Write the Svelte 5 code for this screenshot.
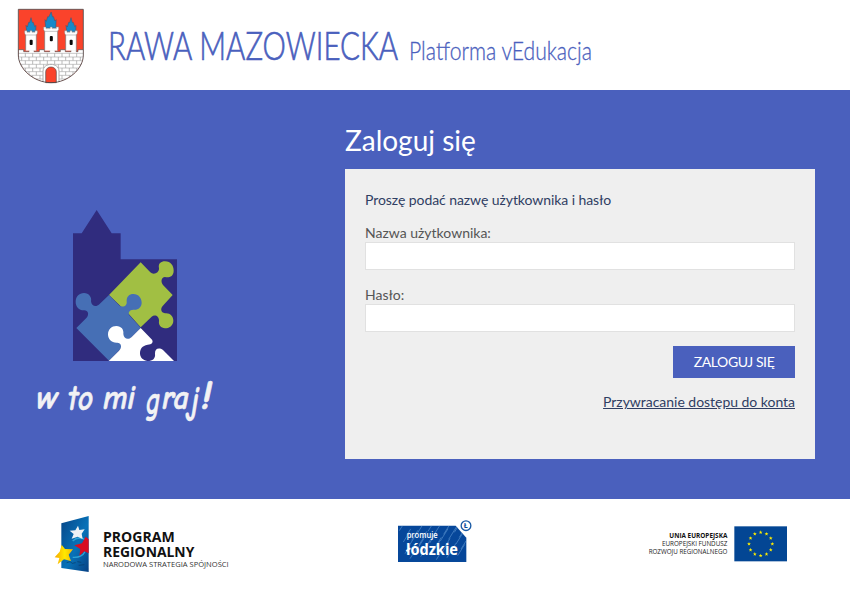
<script>
  const towers = [
    { x: 47, y: 92, w: 32, peak: 53 },
    { x: 104, y: 81, w: 39, peak: 36 },
    { x: 167, y: 92, w: 32, peak: 53 }
  ];
  const rows = [160, 171, 182, 193, 204, 215, 226, 237];
  const star = (cx, cy, r, turn = 0, inner = 0.42) =>
    Array.from({ length: 10 }, (_, i) => {
      const a = (turn - 90 + i * 36) * Math.PI / 180;
      const q = i % 2 ? r * inner : r;
      return `${(cx + q * Math.cos(a)).toFixed(2)},${(cy + q * Math.sin(a)).toFixed(2)}`;
    }).join(' ');
  const euStars = Array.from({ length: 12 }, (_, i) => [
    362 + 35 * Math.sin(i * Math.PI / 6),
    87 - 35 * Math.cos(i * Math.PI / 6)
  ]);
  const scratches = Array.from({ length: 30 }, (_, i) => ({
    x: 28 + ((i * 37) % 190), y: 62 + ((i * 29) % 90), l: 12 + ((i * 7) % 16)
  }));
</script>

<div class="page">
  <header>
    <svg class="crest" width="90" height="90" viewBox="0 0 270 270" aria-label="Herb">
      <defs>
        <clipPath id="shield"><path d="M25 28H220V165C220 207 174 248 123 248S25 207 25 165Z" /></clipPath>
      </defs>
      <g clip-path="url(#shield)">
        <rect x="24" y="27" width="197" height="225" fill="#fa432b" />
        <path d="M24 149H41V155H57V149H72V155H88V149H103V155H119V149H135V155H151V149H166V155H183V149H199V155H204V149H221V252H24Z" fill="#fff" stroke="#555" stroke-width="2" />
        {#each rows as y, r}
          <path d="M24 {y}H221" stroke="#aaa" stroke-width="2" />
          {#each Array(10) as _, c}
            <path d="M{24 + c * 22 + (r % 2) * 11} {y}v11" stroke="#999" stroke-width="2" />
          {/each}
        {/each}
      </g>
      {#each towers as t}
        <path d="M{t.x} 152V{t.y}h{t.w}V152" fill="#fff" stroke="#777" stroke-width="2" />
        <path d="M{t.x + t.w / 2} {t.peak}l4 15 3-1 4 13 4-4-1 {t.y - t.peak - 20}H{t.x + 3}l-2 {t.peak + 20 - t.y} 4 5 4-14 3 1z" fill="#1689c9" stroke="#365775" stroke-width="1.5" />
        <path d="M{t.x - 3} {t.y}h7v5h{t.w / 2 - 7}v-5h6v5h{t.w / 2 - 7}v-5h7v8l-4 5H{t.x}l-3-5z" fill="#fff" stroke="#888" stroke-width="1.5" />
        <rect x={t.x + t.w / 2 - 4} y={t.y + 27} width="9" height="16" rx="3" fill="#090909" />
      {/each}
      <path d="M99 246V214C99 186 147 186 147 214V246" fill="#fff" stroke="#aaa" stroke-width="3" />
      <path d="M107 248V216C107 196 139 196 139 216V248Z" fill="#fa432b" stroke="#555" stroke-width="2" />
      <path d="M25 28H220V165C220 207 174 248 123 248S25 207 25 165Z" fill="none" stroke="#4c4040" stroke-width="2.5" />
    </svg>
    <svg class="title" width="740" height="70" viewBox="0 0 740 70">
      <text x="8" y="60" font-size="38.5" stroke-width=".7" textLength="290" lengthAdjust="spacingAndGlyphs">RAWA MAZOWIECKA</text>
      <text x="309" y="60" font-size="24.5" stroke-width=".3" textLength="183" lengthAdjust="spacingAndGlyphs">Platforma vEdukacja</text>
    </svg>
  </header>

  <main>
    <aside>
      <svg class="puzzle" width="130" height="170" viewBox="0 0 390 510">
        <path d="M39 100H65L110 30L155 100H182V178H351V483H39Z" fill="#302c7e" />
        <path d="M147 285L242 187L271 217C280 226 298 219 297 205C294 190 303 184 315 184C333 184 341 198 341 212C341 230 326 234 315 231C303 232 302 246 309 255L338 285L310 316C300 325 302 338 315 340C330 338 340 349 340 362C340 377 327 385 315 385C303 384 295 375 297 363C298 348 284 342 275 350L242 382L207 343Z" fill="#a1bf43" />
        <path d="M49 384L79 354C89 344 84 331 73 331C58 332 47 321 47 306C47 290 57 279 72 279C87 279 96 292 93 304C94 318 108 323 118 313L147 285L177 316C188 325 202 317 200 305C199 290 208 282 220 282C236 282 245 295 245 308C245 321 234 331 220 329C208 329 203 340 208 346L242 383L147 482Z" fill="#466fb5" />
        <path d="M146 483L177 452C188 441 183 428 172 428C155 429 144 418 144 403C144 388 155 378 169 378C184 378 192 389 190 402C191 417 205 421 215 411L242 384L274 417C283 426 275 434 263 434C246 437 240 447 240 460C240 474 251 482 263 483ZM263 483C278 483 287 475 285 461C284 447 296 441 309 450L342 483Z" fill="#fff" />
      </svg>
      <svg class="slogan" width="200" height="70" viewBox="0 0 200 70">
        <text x="11" y="44" stroke-width=".2" textLength="22" lengthAdjust="spacingAndGlyphs">w</text>
        <text x="43" y="45" font-size="37" textLength="25" lengthAdjust="spacingAndGlyphs">to</text>
        <text x="78" y="44" textLength="32" lengthAdjust="spacingAndGlyphs">mi</text>
        <text transform="translate(121 49) scale(1 1.45)" font-size="28" stroke-width=".2" textLength="14" lengthAdjust="spacingAndGlyphs">g</text>
        <text x="137" y="44" textLength="27" lengthAdjust="spacingAndGlyphs">ra</text>
        <text transform="translate(165 49) scale(1 1.45)" font-size="28" stroke-width=".2" textLength="9" lengthAdjust="spacingAndGlyphs">j</text>
        <text x="176" y="44" font-size="42" textLength="11" lengthAdjust="spacingAndGlyphs">!</text>
      </svg>
    </aside>
    <section>
      <h1>Zaloguj się</h1>
      <form onsubmit={(e) => e.preventDefault()}>
        <p>Proszę podać nazwę użytkownika i hasło</p>
        <label for="user">Nazwa użytkownika:</label>
        <input id="user" type="text" />
        <label class="second" for="password">Hasło:</label>
        <input id="password" type="password" />
        <button>ZALOGUJ SIĘ</button>
        <a href="#recover">Przywracanie dostępu do konta</a>
      </form>
    </section>
  </main>

  <footer>
    <svg width="190" height="75" viewBox="0 0 570 225">
      <defs><linearGradient id="panel" x2="1" y2="1"><stop stop-color="#064587" /><stop offset=".55" stop-color="#0872b8" /><stop offset="1" stop-color="#074083" /></linearGradient>
        <linearGradient id="gold"><stop stop-color="#f7a800" /><stop offset=".55" stop-color="#ffe900" /><stop offset="1" stop-color="#f5b500" /></linearGradient></defs>
      <path d="M49 55L131 33V201L49 189Z" fill="url(#panel)" />
      <path d="M83 108Q100 91 124 106M83 157Q110 159 120 140" stroke="#2da3d6" fill="none" stroke-width="4" />
      <path d="M65 173l10-3 7 5 10-2M97 170l12 2M101 181l17-2" stroke="#063965" stroke-width="2" fill="none" />
      <polygon points="99,62 103,75 119,73 110,86 113,102 98,95 80,101 86,87 74,77 91,76" fill="#eef2f5" />
      <polygon points="122,95 131,103 131,145 118,139 103,153 106,132 88,121 111,115" fill="#d80d22" />
      <polygon points="50,119 60,132 84,133 71,149 78,168 57,163 38,178 43,159 29,157 44,140" fill="url(#gold)" />
      <g fill="#111" font-weight="700" font-family="'Open Sans', sans-serif" font-size="44">
        <text x="174" y="111" textLength="215" lengthAdjust="spacingAndGlyphs">PROGRAM</text>
        <text x="174" y="155" textLength="274" lengthAdjust="spacingAndGlyphs">REGIONALNY</text>
      </g>
      <text x="174" y="186" font-size="21" fill="#333" textLength="377" lengthAdjust="spacingAndGlyphs">NARODOWA STRATEGIA SPÓJNOŚCI</text>
    </svg>
    <svg class="lodzkie" width="90" height="60" viewBox="0 0 270 180">
      <defs><clipPath id="badge"><path d="M24 47H197L229 83V156H24Z" /></clipPath></defs>
      <path d="M24 47H197L229 83V156H24Z" fill="#07489a" />
      <g clip-path="url(#badge)" stroke="#6aa0d8" stroke-width="2.5" opacity=".65">
        {#each scratches as s}<path d="M{s.x} {s.y}l{s.l} {-s.l * 1.6}" />{/each}
      </g>
      <g fill="#fff" font-weight="700">
        <text x="50" y="85" font-size="24" font-weight="600" textLength="93" lengthAdjust="spacingAndGlyphs">promuje</text>
        <text x="48" y="134" font-size="46" textLength="156" lengthAdjust="spacingAndGlyphs">łódzkie</text>
      </g>
      <circle cx="228" cy="47" r="14.5" fill="#fff" stroke="#1a5aa5" stroke-width="4" />
      <text x="221" y="55" font-size="21" font-weight="700" fill="#07489a">Ł</text>
    </svg>
    <svg class="eu" width="160" height="55" viewBox="0 0 480 165">
      <g fill="#222" font-size="19.5">
        <text x="88" y="68" fill="#111" font-weight="700" textLength="174" lengthAdjust="spacingAndGlyphs">UNIA EUROPEJSKA</text>
        <text x="66" y="93" textLength="196" lengthAdjust="spacingAndGlyphs">EUROPEJSKI FUNDUSZ</text>
        <text x="26" y="118" textLength="236" lengthAdjust="spacingAndGlyphs">ROZWOJU REGIONALNEGO</text>
      </g>
      <rect x="283" y="34" width="158" height="105" fill="#034694" />
      {#each euStars as [x, y]}<polygon points={star(x, y, 6)} fill="#ffed00" />{/each}
    </svg>
  </footer>
</div>

<style>
  :global(body) { margin: 0; background: #fff; }
  .page { height: 589px; overflow: hidden; font: 14px/20px Lato, sans-serif; color: #555; }
  svg { display: block; flex: none; overflow: visible; }
  header { display: flex; height: 90px; box-sizing: border-box; padding-left: 10px; }
  .title { margin: 0; fill: #4a60bd; stroke: #4a60bd; font-family: Lato, sans-serif; font-weight: 300; }
  main { display: flex; height: 409px; background: #4a60bd; }
  aside { width: 345px; flex: none; }
  .puzzle { margin: 110px 0 0 60px; }
  .slogan { margin: -5px 0 0 25px; fill: #f2f2f4; stroke: #f2f2f4; stroke-width: .6; stroke-linejoin: round; font-family: "Comic Neue", "Segoe Print", Lato, sans-serif; font-size: 34px; font-weight: 700; font-style: italic; }
  section { width: 470px; }
  h1 { margin: 30px 0 0; height: 49px; color: #fff; font-size: 28px; line-height: 40px; font-weight: 400; }
  form { display: flex; flex-direction: column; height: 290px; padding: 21px 20px 0; box-sizing: border-box; background: #efefef; }
  p { margin: 0 0 13px; color: #2f3e63; letter-spacing: -.07px; }
  label { height: 19px; }
  .second { margin-top: 15px; height: 19px; }
  input { height: 28px; box-sizing: border-box; border: 1px solid #e1e1e1; background: #fff; padding: 0 5px; font: inherit; outline: 0; }
  button { align-self: flex-end; width: 122px; height: 32px; margin-top: 14px; border: 0; padding: 0 0 2px; background: #4a60bd; color: #fff; font: 14px Lato, sans-serif; letter-spacing: -.4px; }
  a { align-self: flex-end; margin-top: 14px; color: #2f3e63; text-decoration: underline; letter-spacing: -.03px; }
  footer { display: flex; height: 90px; padding: 6px 50px 0 45px; box-sizing: border-box; font-family: "Open Sans", sans-serif; }
  .lodzkie { margin: 5px 0 0 155px; }
  .eu { margin: 10px 0 0 auto; }
</style>
